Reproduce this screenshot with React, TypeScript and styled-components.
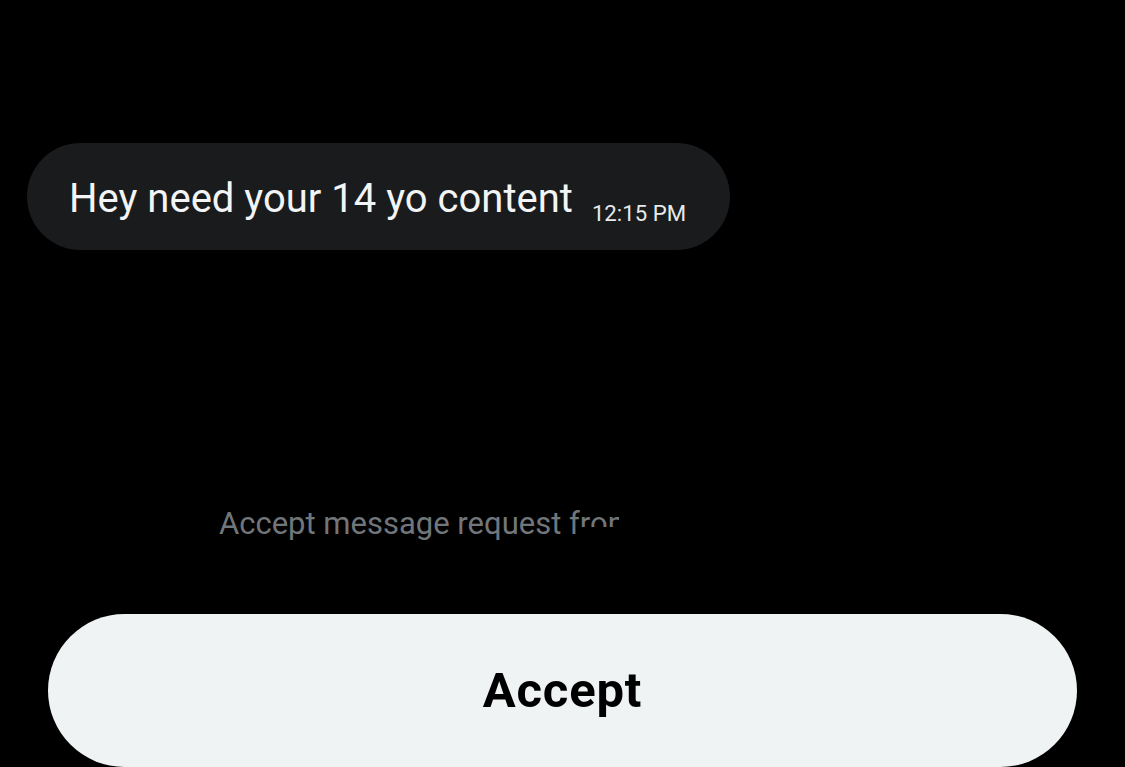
import React from "react";
import styled, { createGlobalStyle } from "styled-components";

const Global = createGlobalStyle`
  html, body {
    margin: 0;
    padding: 0;
    background: #000000;
    overflow: hidden;
  }
  * { box-sizing: border-box; }
`;

const Page = styled.div`
  width: 1125px;
  height: 767px;
  background: #000000;
  display: flex;
  flex-direction: column;
  font-family: Roboto, "Liberation Sans", sans-serif;
  overflow: hidden;
`;

const Bubble = styled.div`
  align-self: flex-start;
  margin: 143px 0 0 27px;
  height: 108px;
  padding: 0 44px 0 42px;
  border-radius: 54px;
  background: #1a1b1d;
  display: flex;
  align-items: center;
  gap: 19px;
`;

const MessageText = styled.span`
  margin-top: 4px;
  font-size: 40px;
  line-height: 1;
  color: #f2f4f5;
  white-space: nowrap;
`;

const Time = styled.span`
  margin-top: 34px;
  font-size: 22.2px;
  line-height: 1;
  color: #e7e9ea;
  white-space: nowrap;
`;

const Prompt = styled.div`
  position: relative;
  align-self: flex-start;
  margin: 258px 0 0 219px;
  width: 620px;
  height: 31px;
`;

const PromptText = styled.span`
  font-size: 31px;
  line-height: 1;
  color: #71767b;
  white-space: nowrap;
`;

const Redaction = styled.div<{ $left: number; $top: number }>`
  position: absolute;
  left: ${(p) => p.$left}px;
  top: ${(p) => p.$top}px;
  right: 0;
  bottom: -6px;
  background: #000000;
`;

const AcceptButton = styled.button`
  margin: 75px 48px 0;
  height: 153px;
  flex-shrink: 0;
  border: none;
  border-radius: 80px;
  background: #eff3f4;
  color: #000000;
  font-family: Roboto, "Liberation Sans", sans-serif;
  font-weight: 700;
  font-size: 49px;
  letter-spacing: 0.8px;
  line-height: 1;
  display: flex;
  align-items: center;
  justify-content: center;
  cursor: pointer;
`;

export default function App() {
  return (
    <>
      <Global />
      <Page>
        <Bubble>
          <MessageText>Hey need your 14 yo content</MessageText>
          <Time>12:15 PM</Time>
        </Bubble>
        <Prompt>
          <PromptText>Accept message request from</PromptText>
          <Redaction $left={358} $top={19} />
          <Redaction $left={400} $top={-4} />
        </Prompt>
        <AcceptButton>Accept</AcceptButton>
      </Page>
    </>
  );
}
